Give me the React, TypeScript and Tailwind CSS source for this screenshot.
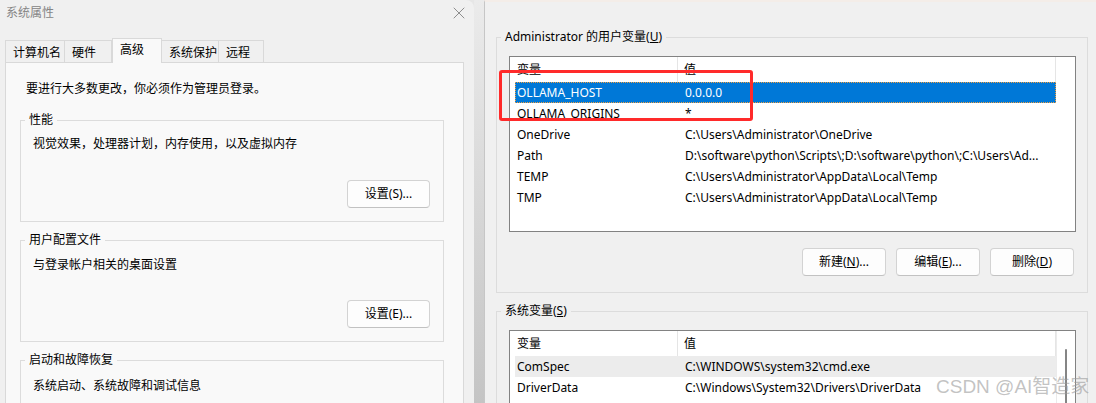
import { X } from 'lucide-react'

const tabs = [
  { label: '计算机名', w: 'w-[60px]' },
  { label: '硬件', w: 'w-[48px]' },
  { label: '高级', w: 'w-[50px]', active: true },
  { label: '系统保护', w: 'w-[58px]' },
  { label: '远程', w: 'w-[46px]' },
]

const userVars = [
  { name: 'OLLAMA_HOST', value: '0.0.0.0', selected: true },
  { name: 'OLLAMA_ORIGINS', value: '*' },
  { name: 'OneDrive', value: 'C:\\Users\\Administrator\\OneDrive' },
  { name: 'Path', value: 'D:\\software\\python\\Scripts\\;D:\\software\\python\\;C:\\Users\\Ad...' },
  { name: 'TEMP', value: 'C:\\Users\\Administrator\\AppData\\Local\\Temp' },
  { name: 'TMP', value: 'C:\\Users\\Administrator\\AppData\\Local\\Temp' },
]

const systemVars = [
  { name: 'ComSpec', value: 'C:\\WINDOWS\\system32\\cmd.exe', hover: true },
  { name: 'DriverData', value: 'C:\\Windows\\System32\\Drivers\\DriverData' },
]

function WinButton({ children, w = 'w-[84px]' }: { children: React.ReactNode; w?: string }) {
  return (
    <div
      className={`${w} h-[28px] flex items-center justify-center bg-[#fdfdfd] border border-[#d3d3d3] border-b-[#c2c2c2] rounded-[4px] text-[12px] text-black`}
    >
      {children}
    </div>
  )
}

function GroupBox({
  label,
  className,
  children,
}: {
  label: React.ReactNode
  className: string
  children: React.ReactNode
}) {
  return (
    <fieldset className={`border border-[#dcdcdc] ${className}`}>
      <legend className="ml-[4px] px-[4px] text-[12px] leading-[16px] text-black">{label}</legend>
      {children}
    </fieldset>
  )
}

function ListHeader({ full }: { full?: boolean }) {
  return (
    <div className="h-[25px] flex text-[12px] text-black">
      <div className="w-[168px] pl-[7px] flex items-center border-r border-[#e5e5e5]">变量</div>
      <div className="w-[378px] pl-[6px] flex items-center border-r border-[#e5e5e5]">值</div>
      {full && <div className="flex-1" />}
    </div>
  )
}

function VarRow({ name, value, selected, hover }: { name: string; value: string; selected?: boolean; hover?: boolean }) {
  return (
    <div
      className={`ml-[5px] w-[541px] h-[21px] flex items-center text-[12px] whitespace-nowrap ${
        selected
          ? 'bg-[#0078d7] text-white outline-1 outline-dotted outline-[#f0a040] -outline-offset-1'
          : hover
            ? 'bg-[#ececec] text-black'
            : 'text-black'
      }`}
    >
      <div className="w-[170px] pl-[2px]">{name}</div>
      <div className="flex-1 overflow-hidden">{value}</div>
    </div>
  )
}

export default function App() {
  return (
    <div className="relative w-[1096px] h-[403px] overflow-hidden flex bg-[#e6e6e6] font-['Noto_Sans','Noto_Sans_CJK_SC',sans-serif] leading-[16px]">
      {/* 系统属性 */}
      <div className="w-[474px] shrink-0 h-full flex flex-col bg-[#f0f0f0] rounded-tr-[8px]">
        <div className="h-[38px] shrink-0 flex items-start justify-between">
          <span className="ml-[6px] mt-[5px] text-[12px] text-[#858585]">系统属性</span>
          <X size={20} strokeWidth={1} className="mr-[5px] mt-[3px] text-[#7a7a7a]" />
        </div>

        <div className="ml-[5px] h-[24px] shrink-0 flex items-end">
          {tabs.map((t) => (
            <div
              key={t.label}
              className={`${t.w} pl-[7px] text-[12px] text-black border-t border-l border-r border-[#d9d9d9] ${
                t.active
                  ? 'relative z-10 h-[25px] -mb-px bg-[#f9f9f9] pt-[3px]'
                  : 'h-[22px] pt-[4px] bg-[#f0f0f0] -ml-px first:ml-0'
              }`}
            >
              {t.label}
            </div>
          ))}
        </div>

        <div className="ml-[5px] w-[459px] flex-1 bg-[#f9f9f9] border border-b-0 border-[#d9d9d9] pt-[18px]">
          <p className="pl-[20px] text-[12px] text-black">要进行大多数更改，你必须作为管理员登录。</p>

          <div className="ml-[14px] w-[424px] flex flex-col">
            <GroupBox label="性能" className="mt-[15px]">
              <p className="mt-[8px] pl-[12px] text-[12px] text-black">视觉效果，处理器计划，内存使用，以及虚拟内存</p>
              <div className="mt-[28px] pb-[13px] pr-[13px] flex justify-end">
                <WinButton w="w-[83px]">设置(S)...</WinButton>
              </div>
            </GroupBox>

            <GroupBox label="用户配置文件" className="mt-[10px]">
              <p className="mt-[9px] pl-[12px] text-[12px] text-black">与登录帐户相关的桌面设置</p>
              <div className="mt-[27px] pb-[13px] pr-[13px] flex justify-end">
                <WinButton w="w-[83px]">设置(E)...</WinButton>
              </div>
            </GroupBox>

            <GroupBox label="启动和故障恢复" className="mt-[10px]">
              <p className="mt-[10px] pl-[12px] text-[12px] text-black">系统启动、系统故障和调试信息</p>
              <div className="h-[40px]" />
            </GroupBox>
          </div>
        </div>
      </div>

      {/* gap between windows */}
      <div className="w-[10px] shrink-0 h-full bg-linear-to-b from-[#ebebeb] to-[#c4c4c4]" />

      {/* 环境变量 */}
      <div className="flex-1 h-full bg-[#f0f0f0] border-l border-[#c6c6c6] border-t-2 border-t-[#f4ede8] flex flex-col">
        <GroupBox
          label={
            <>
              Administrator 的用户变量(<span className="underline">U</span>)
            </>
          }
          className="ml-[11px] w-[592px] mt-[27px]"
        >
          <div className="ml-[12px] mt-[11px] w-[567px] h-[176px] bg-white border border-[#828282]">
            <ListHeader full />
            {userVars.map((v) => (
              <VarRow key={v.name} {...v} />
            ))}
          </div>
          <div className="mt-[16px] pb-[16px] pr-[13px] flex justify-end gap-[10px]">
            <WinButton>
              新建(<span className="underline">N</span>)...
            </WinButton>
            <WinButton>
              编辑(<span className="underline">E</span>)...
            </WinButton>
            <WinButton>
              删除(<span className="underline">D</span>)
            </WinButton>
          </div>
        </GroupBox>

        <GroupBox
          label={
            <>
              系统变量(<span className="underline">S</span>)
            </>
          }
          className="ml-[11px] w-[592px] mt-[10px] flex-1"
        >
          <div className="ml-[12px] mt-[11px] w-[567px] h-[120px] bg-white border border-[#828282] flex">
            <div className="w-[546px]">
              <ListHeader />
              {systemVars.map((v) => (
                <VarRow key={v.name} {...v} />
              ))}
            </div>
            <div className="flex-1 border-l border-[#ebebeb] pt-[18px] flex justify-center">
              <div className="w-[2px] h-[80px] bg-[#858585] rounded-full" />
            </div>
          </div>
        </GroupBox>
      </div>

      {/* annotation + watermark */}
      <div className="absolute left-[499px] top-[70px] w-[254px] h-[51px] border-[3px] border-[#ff2a2a] rounded-[3px]" />
      <div className="absolute left-[936px] top-[376px] text-[19px] leading-[22px] text-[#9a9a9a]/60 font-['Liberation_Sans','Noto_Sans_CJK_SC',sans-serif]">
        CSDN @AI智造家
      </div>
    </div>
  )
}
